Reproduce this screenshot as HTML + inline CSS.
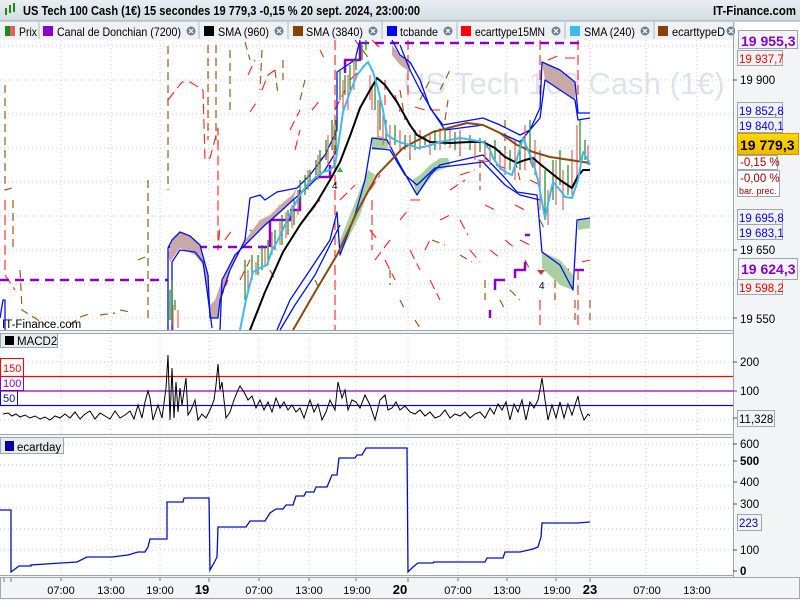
<!DOCTYPE html>
<html><head><meta charset="utf-8"><style>
html,body{margin:0;padding:0;width:800px;height:600px;overflow:hidden;background:#f0f2f4;font-family:"Liberation Sans",sans-serif}
</style></head><body>
<svg width="800" height="600" viewBox="0 0 800 600" xmlns="http://www.w3.org/2000/svg" font-family="Liberation Sans, sans-serif">
<defs>
<linearGradient id="tg" x1="0" y1="0" x2="0" y2="1"><stop offset="0" stop-color="#e9eef2"/><stop offset="1" stop-color="#d3dce3"/></linearGradient>
<linearGradient id="yg" x1="0" y1="0" x2="0" y2="1"><stop offset="0" stop-color="#ffd800"/><stop offset="1" stop-color="#f2b800"/></linearGradient>
</defs>
<rect width="800" height="600" fill="#f2f4f6"/>
<!-- title bar -->
<rect x="0" y="0" width="800" height="21" fill="url(#tg)"/>
<line x1="0" y1="21" x2="800" y2="21" stroke="#9aa6b0"/>
<g transform="translate(5,3)"><rect x="0" y="5" width="2" height="7" fill="#1a8a1a"/><rect x="4" y="2" width="2" height="8" fill="#1a8a1a"/><rect x="8" y="0" width="2" height="9" fill="#1a8a1a"/></g>
<text x="23" y="15" font-size="12.5" font-weight="bold" fill="#000" textLength="397" lengthAdjust="spacingAndGlyphs">US Tech 100 Cash (1€) 15 secondes 19 779,3 -0,15 % 20 sept. 2024, 23:00:00</text>
<text x="713" y="15" font-size="12.5" font-weight="bold" fill="#000" textLength="83" lengthAdjust="spacingAndGlyphs">IT-Finance.com</text>
<!-- legend row -->
<rect x="0" y="22" width="735" height="17" fill="#eef1f4"/>
<g font-size="12" fill="#000" lengthAdjust="spacingAndGlyphs">
<rect x="5" y="26" width="5" height="10" fill="#1a8a1a"/><rect x="10" y="26" width="5" height="10" fill="#e06060"/><text x="19" y="36" textLength="18" lengthAdjust="spacingAndGlyphs">Prix</text>
<line x1="39" y1="22" x2="39" y2="39" stroke="#b0b8c0"/>
<rect x="43" y="26" width="10" height="10" fill="#8a00c8"/><text x="57" y="36" textLength="124" lengthAdjust="spacingAndGlyphs">Canal de Donchian (7200)</text>
<line x1="199" y1="22" x2="199" y2="39" stroke="#b0b8c0"/>
<rect x="204" y="26" width="10" height="10" fill="#000"/><text x="218" y="36" textLength="51" lengthAdjust="spacingAndGlyphs">SMA (960)</text>
<line x1="288" y1="22" x2="288" y2="39" stroke="#b0b8c0"/>
<rect x="293" y="26" width="10" height="10" fill="#8a4000"/><text x="306" y="36" textLength="57" lengthAdjust="spacingAndGlyphs">SMA (3840)</text>
<line x1="382" y1="22" x2="382" y2="39" stroke="#b0b8c0"/>
<rect x="387" y="26" width="10" height="10" fill="#0000ff"/><text x="400" y="36" textLength="38" lengthAdjust="spacingAndGlyphs">tcbande</text>
<line x1="457" y1="22" x2="457" y2="39" stroke="#b0b8c0"/>
<rect x="461" y="26" width="10" height="10" fill="#ff0000"/><text x="475" y="36" textLength="70" lengthAdjust="spacingAndGlyphs">ecarttype15MN</text>
<line x1="565" y1="22" x2="565" y2="39" stroke="#b0b8c0"/>
<rect x="570" y="26" width="10" height="10" fill="#40b8f0"/><text x="584" y="36" textLength="51" lengthAdjust="spacingAndGlyphs">SMA (240)</text>
<line x1="654" y1="22" x2="654" y2="39" stroke="#b0b8c0"/>
<rect x="658" y="26" width="10" height="10" fill="#8a4000"/><text x="672" y="36" textLength="53" lengthAdjust="spacingAndGlyphs">ecarttypeD</text>
</g>
<g fill="#6a7f92">
<circle cx="191" cy="31" r="4.5"/><circle cx="279" cy="31" r="4.5"/><circle cx="373" cy="31" r="4.5"/><circle cx="448" cy="31" r="4.5"/><circle cx="556" cy="31" r="4.5"/><circle cx="645" cy="31" r="4.5"/><circle cx="731" cy="31" r="4.5"/>
</g>
<g stroke="#fff" stroke-width="1.3">
<path d="M189 29l4 4M193 29l-4 4M277 29l4 4M281 29l-4 4M371 29l4 4M375 29l-4 4M446 29l4 4M450 29l-4 4M554 29l4 4M558 29l-4 4M643 29l4 4M647 29l-4 4M729 29l4 4M733 29l-4 4"/>
</g>
<rect x="735" y="22" width="65" height="17" fill="#fff"/>

<!-- panels backgrounds -->
<rect x="0" y="40" width="733" height="290" fill="#fff"/>
<rect x="0" y="333" width="733" height="101" fill="#fff"/>
<rect x="0" y="437" width="733" height="138" fill="#fff"/>
<g stroke="#9aa6b0" fill="none">
<line x1="733.5" y1="22" x2="733.5" y2="578"/>
<line x1="0" y1="330.5" x2="733" y2="330.5"/><line x1="0" y1="333.5" x2="733" y2="333.5"/>
<line x1="0" y1="434.5" x2="733" y2="434.5"/><line x1="0" y1="437.5" x2="733" y2="437.5"/>
<line x1="0" y1="575.5" x2="733" y2="575.5"/>
<rect x="0.5" y="577.5" width="799" height="21"/>
</g>
<!-- grid -->
<g stroke="#c8c8c8" stroke-dasharray="1,3" stroke-width="1">
<path d="M61 40V330M111 40V330M160 40V330M209 40V330M259 40V330M309 40V330M356 40V330M408 40V330M458 40V330M507 40V330M556 40V330M590 40V330M646 40V330M697 40V330"/>
<path d="M61 337V434M111 337V434M160 337V434M209 337V434M259 337V434M309 337V434M356 337V434M408 337V434M458 337V434M507 337V434M556 337V434M590 337V434M646 337V434M697 337V434"/>
<path d="M61 440V575M111 440V575M160 440V575M209 440V575M259 440V575M309 440V575M356 440V575M408 440V575M458 440V575M507 440V575M556 440V575M590 440V575M646 440V575M697 440V575"/>
<path d="M0 46H733M0 80H733M0 114H733M0 148H733M0 182H733M0 216H733M0 250H733M0 284H733M0 318H733"/>
<path d="M0 362H733M0 420H733"/>
<path d="M0 444H733M0 465H733M0 486H733M0 508H733M0 529H733M0 550H733"/>
</g>
<!-- watermark -->
<text x="403" y="94" font-size="31" fill="#dfe2ea">US Tech 100 Cash (1€)</text>

<!-- main chart content -->
<g fill="none" stroke-linejoin="round">
<g stroke="#9a5a20" stroke-width="1.2" stroke-dasharray="8,5">
<path d="M5 85V190L12 188M13 200V250M20 270L22 310L35 318L45 325M70 325L80 317L92 313M100 315L115 313M120 310L130 312M138 260L145 257M148 180V320M168 46V190M208 45V140M216 45V140M218 145V140"/>
<path d="M230 50L230 110M245 42L250 60M262 50L260 90M275 70L278 95M283 60V80M300 100L305 80M320 50L325 60M355 40L370 60M400 90L405 120M410 140V160M420 100L430 80M440 90L450 70M445 120L448 100M460 135V160M480 160V190M505 120V150M515 160L520 180M530 160L540 185M540 220L545 230"/>
<path d="M250 230L258 235M270 270L275 280M315 280L320 290M390 270V285M400 300L405 310M415 320L420 328M432 240L445 245M460 255L472 262M485 280V300M500 300L505 310M510 290L520 300M525 260L530 270M555 280V300M575 300V320M590 300V320"/>
</g>
<g stroke="#ff2020" stroke-width="1.1" stroke-dasharray="10,5">
<path d="M5 200V275L15 290M168 100L182 82L190 82L203 90L205 160L210 158L218 128L218 250L220 225"/>
<path d="M248 75L255 60M250 112L258 100M262 90L268 75L275 70M290 130L300 110M295 150L300 130M312 110L320 100M320 160L330 150M335 110L345 90M350 80L360 70M335 40V330M372 40L380 48M385 80V110M395 95L400 112M408 40V100M415 107L425 110M430 110L440 110"/>
<path d="M220 300L228 280M225 240L232 230M240 280L250 260M273 220L280 205M300 225L320 200M340 200L355 185M370 190L380 175M372 200L372 250M375 260L390 240M400 220L408 210M410 200L420 200M425 250L430 240M440 220L450 215M450 190L465 180M460 175L475 170M478 160L490 162M485 205L495 210M496 165L510 170M515 205L525 210M530 180L540 185M540 40V100M548 60L560 55M565 58L575 58M578 40V100M578 270V330M582 262L590 260"/>
<path d="M370 230L378 240M385 260L395 280M410 250L420 270M430 280L440 300M460 220L468 235M470 250L480 262M490 250L500 258M505 240L515 248M520 240L530 245M540 300V330"/>
</g>
<g stroke="#8a00c8" stroke-width="2.5" stroke-dasharray="9,6">
<path d="M0 280H168M168 247H270M360 43H585M545 270H585"/>
</g>
<g stroke="#8a00c8" stroke-width="2.5">
<path d="M270 247V220H290V215M290 210H300V190M315 177H330V165M345 73V60H360V43M490 318V310M495 290V280H505M515 278V270H525V262M530 235H525"/>
</g>
<path d="M168 255L172 240L180 232L190 236L200 245L208 275L210 318L218 318L220 300L230 270L245 240L260 220L270 215L280 205L292 195L297 188L293 200L280 212L265 225L250 240L235 255L222 280L215 300L210 305L207 290L203 265L195 255L180 248L170 262Z" fill="#c9a8a8"/>
<path d="M417 195L425 185L435 172L445 168L450 165L448 158L440 158L430 165L420 175L412 180Z" fill="#a8d0a0"/>
<path d="M372 138L380 136L388 140L388 148L380 150L372 150Z" fill="#a8d0a0"/>
<path d="M340 255L350 235L360 215L370 185L375 175L368 170L360 190L350 215L340 240Z" fill="#a8d0a0"/>
<path d="M542 252L560 260L573 275L573 290L560 285L542 268Z" fill="#a8d0a0"/>
<path d="M578 220L590 218L590 228L578 230Z" fill="#a8d0a0"/>
<path d="M542 62L560 70L575 82L575 100L560 90L545 80Z" fill="#c9a8a8"/>
<path d="M392 45L400 55L410 62L410 72L400 65L392 55Z" fill="#c9a8a8"/>
<g stroke="#0010f0" stroke-width="1.3">
<path d="M168 330V248L172 240L180 232L190 236L200 245L208 275L210 318L218 318L220 300L230 270L245 240L250 198L260 195L265 200L277 192L297 188L310 175L325 155L337 130L337 72L355 60L360 40"/>
<path d="M172 330L172 262L180 250L195 252L203 262L207 290L212 328M220 330L222 280L235 255L250 240L265 225L280 212L293 200L310 185L325 170L337 150"/>
<path d="M392 40L400 55L410 62L420 80L430 108L443 125L460 122L483 118L500 125L520 135L530 130L540 108L542 62L560 70L575 82L578 113L590 113"/>
<path d="M400 45L410 70L420 90L433 112L445 130L483 125L520 142L540 118L545 80L575 100L578 120L590 118"/>
<path d="M277 330L290 300L310 270L330 240L337 212L340 255L355 215L365 180L372 138L387 140L400 165L417 195L430 175L440 165L483 155L505 178L517 192L537 195L542 252L560 265L573 290L577 220L590 218"/>
<path d="M280 330L295 305L315 275L335 235L340 225M372 148L390 150L405 175L417 185L435 168L483 162L505 185L520 195L540 200"/>
<path d="M0 318L3 300L5 300V330"/>
</g>
<g stroke-width="1.2">
<path stroke="#1a8a1a" d="M170 320V290M175 310V300M172 325V280M245 300V260M252 280V255M258 275V255M262 270V245M268 265V240M275 250V230M282 245V215M288 235V210M294 225V200M300 205V180M305 195V175M310 185V170M316 175V160M320 175V150M326 160V140M332 150V120M336 150V120M340 100V70M345 95V75M350 90V65M356 70V55M362 60V45M366 50V40M375 110V80M380 130V100M386 140V120M395 145V125M405 150V135M415 150V130M425 145V135M435 150V130M445 145V130M455 150V132M470 150V135M480 152V138M495 160V140M510 170V150M520 170V140M530 160V120M545 220V170M553 200V160M560 185V150M568 195V165M580 160V120M585 160V140"/>
<path stroke="#e06060" d="M173 330V305M178 328V310M248 290V270M256 275V262M265 265V248M272 255V232M280 245V222M286 238V212M292 228V205M298 215V190M308 190V170M318 180V155M328 165V135M334 165V125M343 110V80M348 110V75M354 90V60M370 100V75M372 110V85M378 140V100M383 145V115M390 148V125M400 150V130M410 155V135M420 150V130M430 155V135M440 150V128M450 148V130M460 155V130M475 160V140M485 160V140M490 165V145M500 170V150M505 175V150M515 180V140M525 170V125M535 175V140M540 210V150M548 225V190M556 205V160M563 210V170M572 195V150M577 180V125M588 165V145"/>
</g>
<path stroke="#8a4a10" stroke-width="2" d="M293 330L315 292L337 255L357 212L377 175L403 148L433 132L467 123L483 125L500 133L517 145L533 152L550 157L570 160L590 163"/>
<path stroke="#000" stroke-width="2" d="M250 330L265 292L283 252L300 225L317 202L330 180L340 162L350 136L360 108L370 90L377 78L385 85L397 102L410 125L417 135L430 142L450 143L470 142L483 142L495 148L505 157L517 163L525 160L533 158L540 164L550 172L560 180L572 188L578 176L583 170L590 170"/>
<path stroke="#40b8f0" stroke-width="2" d="M240 330L246 300L253 272L260 268L267 265L272 250L277 242L285 225L293 208L300 195L307 185L315 178L323 172L330 170L335 165L339 140L343 112L350 92L357 75L364 66L368 62L373 72L377 85L383 110L387 135L395 140L402 143L410 145L418 148L428 146L440 142L450 140L460 138L472 140L483 142L490 150L493 158L500 168L507 173L512 175L518 155L523 138L528 150L533 162L538 180L545 218L550 195L553 182L560 190L565 197L572 198L578 180L583 152L588 160L590 165"/>
<text x="332" y="189" font-size="10" fill="#000" stroke="none">4</text>
<path d="M337 172l3 -5l3 5z" fill="#30c030" stroke="none"/>
<text x="539" y="289" font-size="10" fill="#000" stroke="none">4</text>
<path d="M537 270l4 5l4 -5z" fill="#e03030" stroke="none"/>
</g>
<text x="2" y="328" font-size="11.5" fill="#000">IT-Finance.com</text>

<g font-size="11.5" fill="#000">
<line x1="733" y1="80" x2="737" y2="80" stroke="#555"/><text x="740" y="84">19 900</text>
<line x1="733" y1="250" x2="737" y2="250" stroke="#555"/><text x="740" y="254">19 650</text>
<line x1="733" y1="318" x2="737" y2="318" stroke="#555"/><text x="740" y="323">19 550</text>
</g>
<g stroke="#9aa6b0" fill="#f2f2f2">
<rect x="738.5" y="30.5" width="59" height="18" fill="#f4f4f4"/>
<rect x="737.5" y="50.5" width="45" height="15"/>
<rect x="737.5" y="102.5" width="45" height="15"/>
<rect x="737.5" y="117.5" width="45" height="15"/>
<rect x="737.5" y="133.5" width="61" height="21" fill="url(#yg)" stroke="#c89800"/>
<rect x="737.5" y="155.5" width="40" height="14" fill="#fff"/>
<rect x="737.5" y="170.5" width="42" height="26" fill="#fff"/>
<rect x="737.5" y="209.5" width="45" height="15"/>
<rect x="737.5" y="224.5" width="45" height="15"/>
<rect x="738.5" y="258.5" width="59" height="21" fill="#f4f4f4"/>
<rect x="737.5" y="279.5" width="45" height="15"/>
</g>
<g>
<text x="741" y="46" font-size="14" font-weight="bold" fill="#8a00c8">19 955,3</text>
<text x="739" y="63" font-size="11.5" fill="#ff0000">19 937,7</text>
<text x="739" y="115" font-size="11.5" fill="#0000ff">19 852,8</text>
<text x="739" y="130" font-size="11.5" fill="#0000ff">19 840,1</text>
<text x="740" y="150" font-size="14" font-weight="bold" fill="#000">19 779,3</text>
<text x="740" y="166" font-size="11.5" fill="#a00000">-0,15 %</text>
<text x="740" y="182" font-size="11.5" fill="#a00000">-0,00 %</text>
<text x="739" y="194" font-size="9" fill="#a00000">bar. prec.</text>
<text x="739" y="222" font-size="11.5" fill="#0000ff">19 695,8</text>
<text x="739" y="237" font-size="11.5" fill="#0000ff">19 683,1</text>
<text x="741" y="274" font-size="14" font-weight="bold" fill="#8a00c8">19 624,3</text>
<text x="739" y="292" font-size="11.5" fill="#ff0000">19 598,2</text>
</g>

<rect x="0.5" y="333.5" width="57" height="14" fill="#e8ecef" stroke="#9aa6b0"/>
<rect x="5" y="336" width="9" height="9" fill="#000"/>
<text x="17" y="345" font-size="11.5">MACD2</text>
<g fill="#fff">
<rect x="0.5" y="358.5" width="23" height="18" stroke="#ff0000"/>
<rect x="0.5" y="376.5" width="23" height="14" stroke="#8a00c8"/>
<rect x="0.5" y="390.5" width="17" height="15" stroke="#1010a0"/>
</g>
<text x="3" y="372" font-size="11" fill="#ff0000">150</text>
<text x="3" y="387" font-size="11" fill="#8a00c8">100</text>
<text x="3" y="402" font-size="11" fill="#1010a0">50</text>
<line x1="0" y1="376.5" x2="733" y2="376.5" stroke="#ff0000" stroke-width="1.3"/>
<line x1="0" y1="391" x2="733" y2="391" stroke="#8a00c8" stroke-width="1.3"/>
<line x1="0" y1="405.5" x2="733" y2="405.5" stroke="#1010a0" stroke-width="1.3"/>
<path fill="none" stroke="#000" stroke-width="1" d="M3 414L8 413L12 416L16 414L20 417L25 415L30 418L35 416L40 419L45 417L50 420L55 416L60 418L65 414L70 418L75 412L80 419L85 414L90 411L95 419L100 413L105 416L110 419L115 411L120 418L125 415L130 411L134 419L138 405L142 418L145 402L148 391L150 398L153 420L158 405L162 418L166 388L168 355L170 420L172 368L174 418L176 382L178 412L180 388L182 405L186 378L188 415L191 410L195 400L198 420L202 414L206 418L210 410L214 400L216 385L218 364L220 390L222 382L226 418L230 412L234 400L238 390L240 386L244 392L248 400L252 396L256 408L260 400L264 410L268 402L272 412L276 398L280 408L284 402L288 410L292 405L296 412L300 408L304 418L310 400L314 412L318 404L322 420L326 412L330 400L335 410L338 382L342 398L345 390L348 410L352 400L356 402L360 408L365 395L370 405L375 420L380 400L385 395L388 410L392 408L396 402L400 410L405 406L410 412L415 414L420 410L425 416L430 412L435 418L440 416L445 410L450 418L455 414L460 416L465 412L470 418L475 414L480 412L485 418L490 408L494 414L498 404L502 410L506 402L510 420L514 404L518 412L522 400L526 420L530 402L534 408L538 400L540 390L542 378L545 400L548 420L552 405L556 418L560 402L564 418L568 404L572 415L576 402L578 396L580 408L584 420L588 414L590 416"/>
<g font-size="11.5">
<line x1="733" y1="362" x2="737" y2="362" stroke="#555"/><text x="740" y="366">200</text>
<line x1="733" y1="391" x2="737" y2="391" stroke="#555"/><text x="740" y="395">100</text>
<line x1="733" y1="418" x2="737" y2="418" stroke="#555"/>
</g>
<rect x="737.5" y="410.5" width="37" height="16" fill="#f4f4f4" stroke="#9aa6b0"/>
<text x="739" y="423" font-size="11.5">11,328</text>

<rect x="0.5" y="437.5" width="63" height="16" fill="#e8ecef" stroke="#9aa6b0"/>
<rect x="5" y="441" width="9" height="10" fill="#0000a0"/>
<text x="17" y="451" font-size="11.5">ecartday</text>
<path fill="none" stroke="#0010c0" stroke-width="1.3" d="M0 510H11V572L19 566H31V565L61 563L77 562L87 557H112L128 555L138 552H145L148 547L150 539H167V502H183L184 498H209L210 570L214 563L217 557L218 527H246L250 521H265L270 513L276 509H283L286 505H293L296 496H304L306 492H314L316 487H327L332 475H337L339 458H355L357 455H362L366 448H407L408 572L413 567L418 563H433L434 562H485L487 558H503L505 552H520L533 549L538 547L541 537L542 523H577L590 522"/>
<g font-size="11.5">
<line x1="733" y1="444" x2="737" y2="444" stroke="#555"/><text x="740" y="448">600</text>
<line x1="733" y1="461" x2="737" y2="461" stroke="#555"/><text x="740" y="465" font-weight="bold">500</text>
<line x1="733" y1="482" x2="737" y2="482" stroke="#555"/><text x="740" y="486">400</text>
<line x1="733" y1="504" x2="737" y2="504" stroke="#555"/><text x="740" y="508">300</text>
<line x1="733" y1="550" x2="737" y2="550" stroke="#555"/><text x="740" y="554">100</text>
<line x1="733" y1="571" x2="737" y2="571" stroke="#555"/><text x="740" y="575" font-weight="bold">0</text>
</g>
<rect x="737.5" y="514.5" width="24" height="16" fill="#f4f4f4" stroke="#9aa6b0"/>
<text x="739" y="527" font-size="11.5" fill="#0000c0">223</text>

<g stroke="#777"><path d="M4 578v4M11 578v4M61 578v3M111 578v3M160 578v3M209 578v4M259 578v3M309 578v3M356 578v3M408 578v4M458 578v3M507 578v3M556 578v3M590 578v4"/></g>
<g font-size="11" text-anchor="middle" fill="#000">
<text x="61" y="594">07:00</text><text x="111" y="594">13:00</text><text x="160" y="594">19:00</text>
<text x="202" y="594" font-weight="bold" font-size="13">19</text>
<text x="259" y="594">07:00</text><text x="309" y="594">13:00</text><text x="357" y="594">19:00</text>
<text x="400" y="594" font-weight="bold" font-size="13">20</text>
<text x="458" y="594">07:00</text><text x="507" y="594">13:00</text><text x="557" y="594">19:00</text>
<text x="590" y="594" font-weight="bold" font-size="13">23</text>
<text x="647" y="594">07:00</text><text x="697" y="594">13:00</text>
</g>
</svg>
</body></html>
